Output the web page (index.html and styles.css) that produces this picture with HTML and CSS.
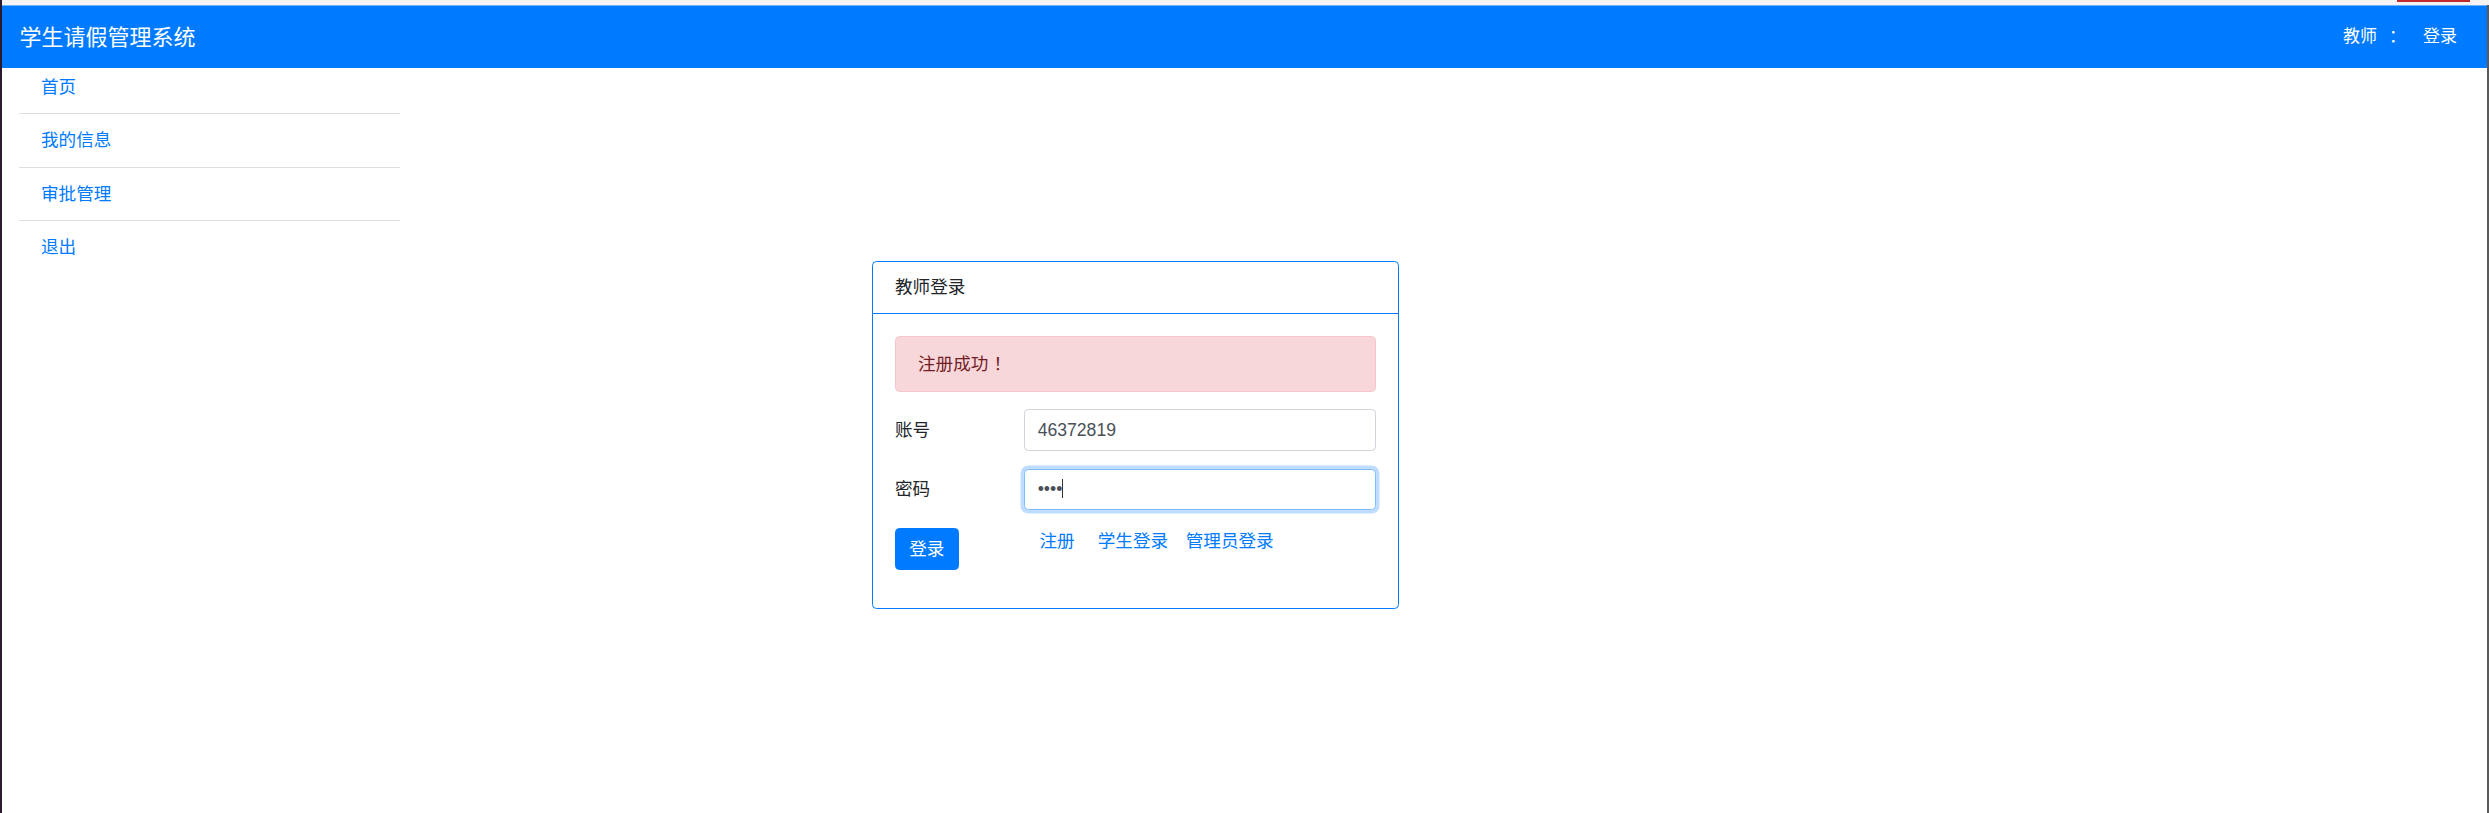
FILE: index.html
```html
<!DOCTYPE html>
<html lang="zh-CN">
<head>
<meta charset="utf-8">
<title>学生请假管理系统</title>
<link rel="stylesheet" href="styles.css">
</head>
<body>
<div class="window">
  <div class="chrome"><span class="chrome-red"></span></div>
  <div class="page">
    <nav class="navbar">
      <a class="brand" href="#">学生请假管理系统</a>
      <div class="nav-right">
        <span class="nav-item">教师</span>
        <span class="nav-colon">：</span>
        <a class="nav-item" href="#">登录</a>
      </div>
    </nav>
    <div class="layout">
      <ul class="sidebar">
        <li class="side-item first"><a href="#">首页</a></li>
        <li class="side-item"><a href="#">我的信息</a></li>
        <li class="side-item"><a href="#">审批管理</a></li>
        <li class="side-item last"><a href="#">退出</a></li>
      </ul>
      <main class="main">
        <div class="card">
          <div class="card-header">教师登录</div>
          <div class="card-body">
            <div class="alert">注册成功<span class="bang">！</span></div>
            <div class="form-row">
              <label class="form-label">账号</label>
              <div class="field"><input class="form-input" type="text" value="46372819"></div>
            </div>
            <div class="form-row">
              <label class="form-label">密码</label>
              <div class="field"><input class="form-input focused" type="password" value="1234"><span class="caret"></span></div>
            </div>
            <div class="form-row actions">
              <div class="btn-col"><button class="btn" type="button">登录</button></div>
              <div class="links">
                <a class="link l1" href="#">注册</a>
                <a class="link l2" href="#">学生登录</a>
                <a class="link l3" href="#">管理员登录</a>
              </div>
            </div>
          </div>
        </div>
      </main>
    </div>
  </div>
</div>
</body>
</html>
```

FILE: styles.css
```css
* { box-sizing: border-box; }
html, body {
  margin: 0;
  padding: 0;
  background: #ffffff;
}
body {
  font-family: "Liberation Sans", "Noto Sans CJK SC", sans-serif;
  font-size: 17.6px;
  line-height: 26.4px;
  color: #212529;
}
a { text-decoration: none; }

.window {
  height: 813px;
  border-left: 2px solid #2b1a2d;
  display: flex;
  flex-direction: column;
  overflow: hidden;
}
.chrome {
  height: 5px;
  background: #f4f4f4;
  display: flex;
  justify-content: flex-end;
  flex-shrink: 0;
}
.chrome-red {
  width: 73px;
  height: 2px;
  margin-right: 19px;
  background: #c02a2a;
}
.page {
  flex: 1;
  border-right: 2px solid #5a5a5a;
  display: flex;
  flex-direction: column;
}

/* navbar */
.navbar {
  height: 63px;
  background: #007bff;
  border-top: 1px solid #6fb1f7;
  display: flex;
  align-items: center;
  justify-content: space-between;
  padding: 0 30px 0 17.5px;
  flex-shrink: 0;
}
.brand {
  color: #ffffff;
  font-size: 22px;
  line-height: 33px;
}
.nav-right {
  display: flex;
  align-items: center;
  font-size: 17px;
  line-height: 26px;
  color: #ffffff;
}
.nav-item { color: #ffffff; }
.nav-colon {
  margin: 0 17px 0 12px;
}

/* layout */
.layout {
  display: flex;
  flex: 1;
}
.sidebar {
  list-style: none;
  margin: 0 0 0 17px;
  padding: 0;
  width: 381px;
  flex-shrink: 0;
  font-size: 17.6px;
  line-height: 26.4px;
}
.side-item {
  padding: 13.2px 22px 13px;
  border-bottom: 1px solid #dedede;
}
.side-item.first { padding-top: 5.5px; }
.side-item.last { border-bottom: none; }
.side-item a { color: #007bff; }

.main {
  flex: 1;
  padding: 193px 0 0 472px;
}

/* card */
.card {
  width: 527px;
  border: 1px solid #007bff;
  border-radius: 4.4px;
  background: #ffffff;
}
.card-header {
  padding: 12.2px 22px;
  line-height: 26.4px;
  border-bottom: 1px solid #007bff;
  color: #212529;
}
.card-body {
  padding: 22px 22px 21px;
}
.alert {
  background: #f8d7da;
  border: 1px solid #f5c6cb;
  color: #721c24;
  border-radius: 4.4px;
  padding: 13.2px 22px;
  margin-bottom: 17.6px;
}
.bang {
  font-family: "Noto Sans CJK JP", "Noto Sans CJK SC", sans-serif;
  margin-left: 5px;
}
.form-row {
  display: grid;
  grid-template-columns: 128.5px 1fr;
  align-items: center;
  margin-bottom: 17.6px;
}
.form-row.actions { align-items: start; }
.form-label { color: #212529; }
.field { position: relative; }
.form-input {
  display: block;
  width: 100%;
  height: 41.8px;
  padding: 6.6px 13.2px;
  font-family: "Liberation Sans", "Noto Sans CJK SC", sans-serif;
  font-size: 17.6px;
  line-height: 26.4px;
  color: #495057;
  background: #ffffff;
  border: 1px solid #ced4da;
  border-radius: 4.4px;
  outline: none;
}
.form-input.focused {
  border-color: #80bdff;
  box-shadow: 0 0 0 3.5px rgba(0, 123, 255, 0.25);
}
.caret {
  position: absolute;
  left: 38.5px;
  top: 10px;
  width: 1px;
  height: 19px;
  background: #333333;
}
.btn {
  display: block;
  height: 41.8px;
  padding: 0 13.2px;
  background: #007bff;
  border: 1px solid #007bff;
  border-radius: 4.4px;
  color: #ffffff;
  font-family: "Liberation Sans", "Noto Sans CJK SC", sans-serif;
  font-size: 17.6px;
  line-height: 26.4px;
}
.links {
  display: flex;
  line-height: 26.4px;
}
.link { color: #007bff; }
.l1 { margin-left: 16px; }
.l2 { margin-left: 23px; }
.l3 { margin-left: 17.6px; }
```
